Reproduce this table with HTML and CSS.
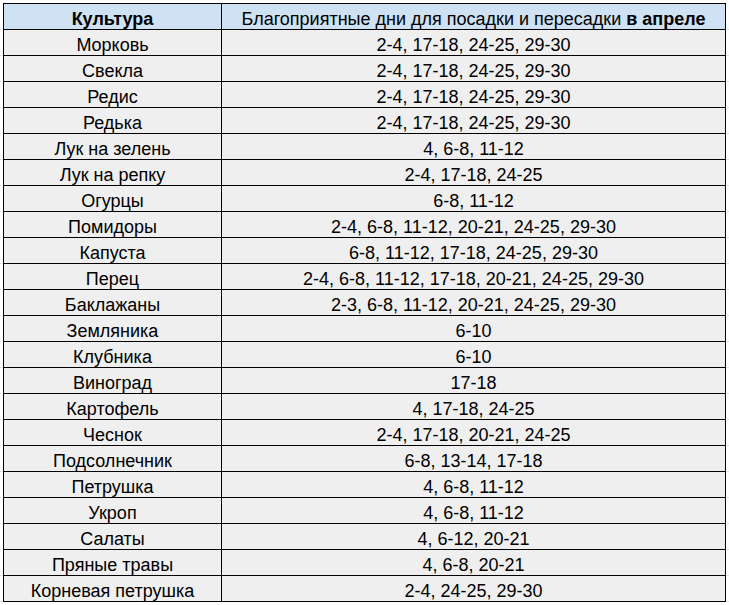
FILE: index.html
```html
<!DOCTYPE html>
<html lang="ru">
<head>
<meta charset="utf-8">
<title>Благоприятные дни в апреле</title>
<link rel="stylesheet" href="styles.css">
</head>
<body>
<table class="sheet">
  <colgroup><col class="c1"><col class="c2"></colgroup>
  <thead>
    <tr class="head"><th>Культура</th><th class="norm">Благоприятные дни для посадки и пересадки <b>в апреле</b></th></tr>
  </thead>
  <tbody>
    <tr><td>Морковь</td><td>2-4, 17-18, 24-25, 29-30</td></tr>
    <tr><td>Свекла</td><td>2-4, 17-18, 24-25, 29-30</td></tr>
    <tr><td>Редис</td><td>2-4, 17-18, 24-25, 29-30</td></tr>
    <tr><td>Редька</td><td>2-4, 17-18, 24-25, 29-30</td></tr>
    <tr><td>Лук на зелень</td><td>4, 6-8, 11-12</td></tr>
    <tr><td>Лук на репку</td><td>2-4, 17-18, 24-25</td></tr>
    <tr><td>Огурцы</td><td>6-8, 11-12</td></tr>
    <tr><td>Помидоры</td><td>2-4, 6-8, 11-12, 20-21, 24-25, 29-30</td></tr>
    <tr><td>Капуста</td><td>6-8, 11-12, 17-18, 24-25, 29-30</td></tr>
    <tr><td>Перец</td><td>2-4, 6-8, 11-12, 17-18, 20-21, 24-25, 29-30</td></tr>
    <tr><td>Баклажаны</td><td>2-3, 6-8, 11-12, 20-21, 24-25, 29-30</td></tr>
    <tr><td>Земляника</td><td>6-10</td></tr>
    <tr><td>Клубника</td><td>6-10</td></tr>
    <tr><td>Виноград</td><td>17-18</td></tr>
    <tr><td>Картофель</td><td>4, 17-18, 24-25</td></tr>
    <tr><td>Чеснок</td><td>2-4, 17-18, 20-21, 24-25</td></tr>
    <tr><td>Подсолнечник</td><td>6-8, 13-14, 17-18</td></tr>
    <tr><td>Петрушка</td><td>4, 6-8, 11-12</td></tr>
    <tr><td>Укроп</td><td>4, 6-8, 11-12</td></tr>
    <tr><td>Салаты</td><td>4, 6-12, 20-21</td></tr>
    <tr><td>Пряные травы</td><td>4, 6-8, 20-21</td></tr>
    <tr><td>Корневая петрушка</td><td>2-4, 24-25, 29-30</td></tr>
  </tbody>
</table>
</body>
</html>
```
FILE: styles.css
```css
html {
  margin: 0;
  padding: 0;
  background: #ffffff;
}
body {
  margin: 0;
  padding: 3px 0 0 3px;
  font-family: "Liberation Sans", Arial, sans-serif;
  font-size: 18px;
  color: #000000;
  background-color: #ffffff;
  background-image: repeating-linear-gradient(to bottom, transparent 0, transparent 25px, #e2e3e3 25px, #e2e3e3 26px);
  background-position: 0 4px;
  background-repeat: repeat-x;
}
.sheet {
  border-collapse: collapse;
  table-layout: fixed;
  width: 723px;
}
.c1 { width: 218px; }
.c2 { width: 504px; }
.sheet th,
.sheet td {
  border: 1px solid #000000;
  height: 20px;
  padding: 5px 2px 0;
  text-align: center;
  vertical-align: top;
  white-space: nowrap;
  line-height: 20px;
}
.sheet th {
  background: #cfe2f3;
  font-weight: bold;
}
.sheet th.norm {
  font-weight: normal;
}
.sheet td {
  background: #efefef;
}
```
